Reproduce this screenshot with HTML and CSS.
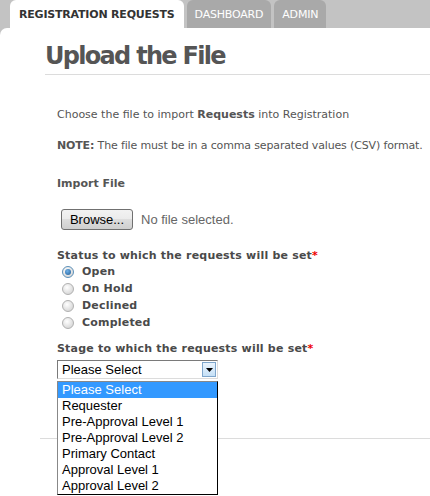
FILE: index.html
```html
<!DOCTYPE html>
<html lang="en">
<head>
    <meta charset="UTF-8">
    <title>Upload the File</title>
    <link rel="stylesheet" href="styles.css">
</head>
<body>
    <div class="tabbar">
        <div class="tab active">REGISTRATION REQUESTS</div>
        <div class="tab">DASHBOARD</div>
        <div class="tab">ADMIN</div>
    </div>

    <div class="panel">
        <h1 class="title">Upload the File</h1>

        <div class="content">
            <p class="intro">Choose the file to import <b>Requests</b> into Registration</p>
            <p class="note"><b>NOTE:</b> The file must be in a comma separated values (CSV) format.</p>

            <p class="field-label">Import File</p>
            <div class="file-row">
                <span class="browse-btn">Browse...</span>
                <span class="no-file">No file selected.</span>
            </div>

            <p class="field-label status-label">Status to which the requests will be set<span class="req">*</span></p>
            <div class="radio-list">
                <div class="radio-row"><span class="radio checked"></span>Open</div>
                <div class="radio-row"><span class="radio"></span>On Hold</div>
                <div class="radio-row"><span class="radio"></span>Declined</div>
                <div class="radio-row"><span class="radio"></span>Completed</div>
            </div>

            <p class="field-label stage-label">Stage to which the requests will be set<span class="req">*</span></p>
            <div class="combo">
                <div class="combo-box">
                    <span class="combo-value">Please Select</span>
                    <span class="combo-arrow">
                        <svg width="7" height="4" viewBox="0 0 7 4"><path d="M0 0h7L3.5 4z" fill="#000"/></svg>
                    </span>
                </div>
                <!-- open dropdown -->
                <ul class="combo-list">
                    <li class="selected">Please Select</li>
                    <li>Requester</li>
                    <li>Pre-Approval Level 1</li>
                    <li>Pre-Approval Level 2</li>
                    <li>Primary Contact</li>
                    <li>Approval Level 1</li>
                    <li>Approval Level 2</li>
                </ul>
            </div>
        </div>

        <div class="footer-line"></div>
    </div>
</body>
</html>
```

FILE: styles.css
```css
html, body {
    margin: 0;
    padding: 0;
    background: #c3c3c3;
    height: 496px;
    overflow: hidden;
}

body {
    font-family: "DejaVu Sans", Verdana, sans-serif;
    color: #555;
}

/* Tabs */
.tabbar {
    display: flex;
    align-items: flex-end;
    height: 28px;
    padding-left: 10px;
    gap: 3px;
}

.tab {
    height: 28px;
    line-height: 30px;
    padding: 0 8px;
    font-size: 11px;
    color: #fff;
    background: #a9a9a9;
    border-radius: 6px 6px 0 0;
    letter-spacing: -0.2px;
}

.tab.active {
    background: #fff;
    color: #333;
    font-weight: bold;
    padding: 0 9px;
}

/* Panel */
.panel {
    background: #fff;
    border-radius: 7px 0 0 0;
    height: 468px;
    position: relative;
    overflow: hidden;
}

.title {
    margin: 0 0 0 45px;
    padding-top: 12px;
    height: 34px;
    font-size: 24px;
    line-height: 32px;
    color: #555;
    border-bottom: 1px solid #dcdcdc;
    letter-spacing: -1.7px;
}

.content {
    padding-left: 57px;
    font-size: 11px;
    letter-spacing: 0;
}

.content p {
    margin: 0;
}

.intro {
    margin-top: 33px !important;
    line-height: 14px;
}

.note {
    margin-top: 17px !important;
    line-height: 14px;
    white-space: nowrap;
    letter-spacing: -0.15px;
}

.field-label {
    font-weight: bold;
    font-size: 11px;
    line-height: 14px;
    margin-top: 24px !important;
}

/* File input */
.file-row {
    display: flex;
    align-items: center;
    margin-top: 18px;
    margin-left: 4px;
    height: 20px;
}

.browse-btn {
    display: inline-block;
    width: 70px;
    height: 19px;
    line-height: 19px;
    text-align: center;
    font-family: "Liberation Sans", Arial, sans-serif;
    font-size: 13px;
    color: #000;
    border: 1px solid #707070;
    border-radius: 3px;
    background: linear-gradient(#f2f2f2, #ebebeb 50%, #dddddd 50%, #cfcfcf);
}

.no-file {
    margin-left: 8px;
    font-family: "Liberation Sans", Arial, sans-serif;
    font-size: 13px;
    color: #666;
}

.status-label {
    margin-top: 20px !important;
    color: #4a4a4a;
    letter-spacing: 0.2px;
}

.stage-label {
    margin-top: 11px !important;
    color: #4a4a4a;
    letter-spacing: 0.2px;
}

.req {
    color: #e00;
}

/* Radios */
.radio-list {
    margin-left: 5px;
}

.radio-row {
    display: flex;
    align-items: center;
    height: 17px;
    font-weight: bold;
    font-size: 11px;
    color: #4a4a4a;
    letter-spacing: 0.2px;
}

.radio {
    width: 12px;
    height: 12px;
    border-radius: 50%;
    border: 1px solid #b0b0b0;
    background: radial-gradient(circle at 40% 35%, #fff, #e0e0e0 60%, #cfcfcf);
    margin-right: 8px;
    box-sizing: border-box;
    position: relative;
}

.radio.checked {
    border-color: #5a8fb8;
}

.radio.checked::after {
    content: "";
    position: absolute;
    left: 2px;
    top: 2px;
    width: 6px;
    height: 6px;
    border-radius: 50%;
    background: radial-gradient(circle at 40% 35%, #6fb0e8, #1e5b94);
}

/* Select combo */
.combo {
    position: relative;
    margin-top: 4px;
    width: 161px;
    font-family: "Liberation Sans", Arial, sans-serif;
}

.combo-box {
    display: flex;
    align-items: center;
    height: 19px;
    border: 1px solid #7a7a7a;
    border-right-color: #dcdcdc;
    border-bottom-color: #dcdcdc;
    box-sizing: border-box;
    background: #fff;
    font-size: 13px;
    color: #000;
}

.combo-value {
    flex: 1;
    padding-left: 4px;
}

.combo-arrow {
    width: 14px;
    height: 15px;
    margin-right: 1px;
    display: flex;
    align-items: center;
    justify-content: center;
    border: 1px solid #7ea6cc;
    box-sizing: border-box;
    background: linear-gradient(#eaf4fd, #c5e0f7);
}

.combo-list {
    position: absolute;
    top: 21px;
    left: 0;
    width: 161px;
    margin: 0;
    padding: 0;
    list-style: none;
    background: #fff;
    border: 1px solid #000;
    border-left-color: #888;
    border-top-color: #888;
    box-sizing: border-box;
    z-index: 2;
    font-size: 13px;
    color: #000;
}

.combo-list li {
    height: 16px;
    line-height: 16px;
    padding-left: 4px;
}

.combo-list li.selected {
    background: #3399ff;
    color: #fff;
}

.footer-line {
    position: absolute;
    top: 410px;
    left: 40px;
    right: 0;
    border-top: 1px solid #dcdcdc;
}
```
